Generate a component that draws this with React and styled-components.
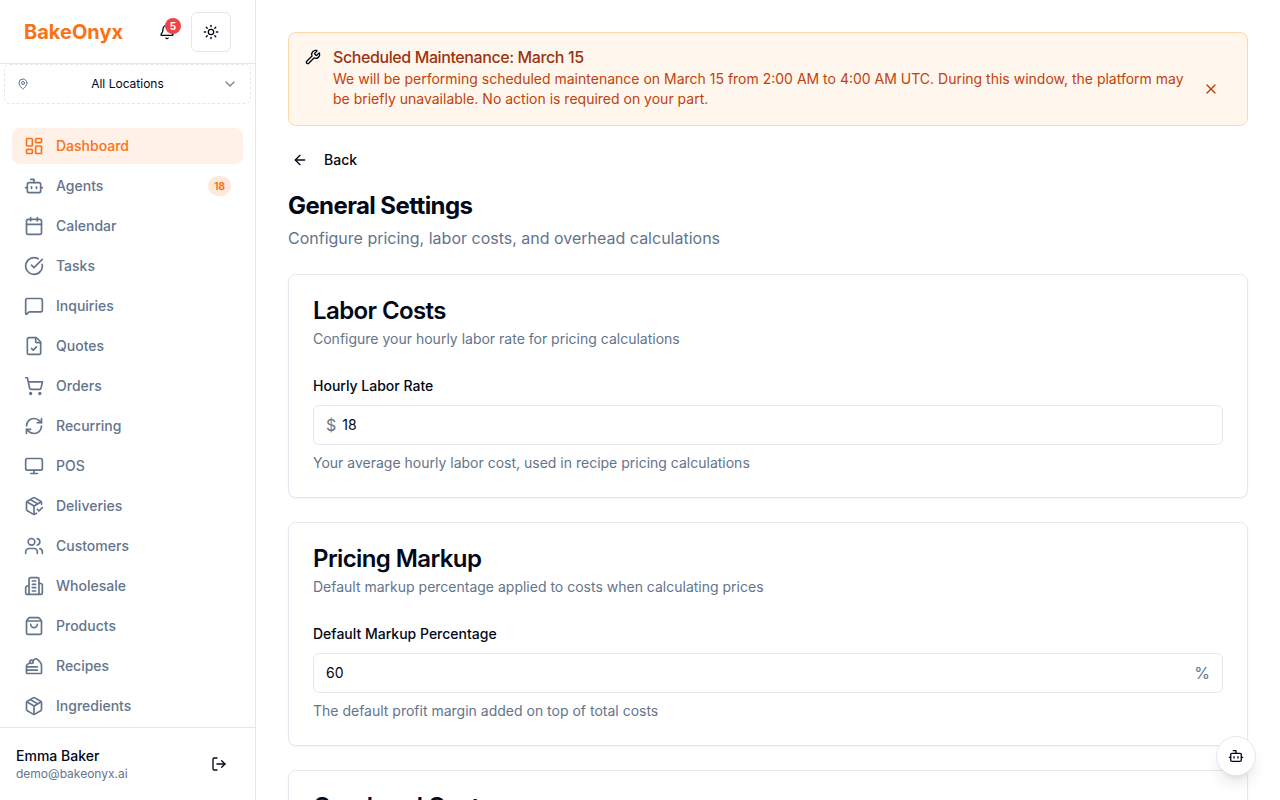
import React from "react";
import styled, { createGlobalStyle, css } from "styled-components";
import {
  ArrowLeft, Bell, Bot, CakeSlice, Calendar, ChevronDown, CircleCheckBig, FileCheck,
  LayoutDashboard, LogOut, MapPin, MessageSquare, Monitor, Package, PackageCheck,
  RefreshCw, ShoppingBag, ShoppingCart, Sun, Users, Wrench, X,
} from "lucide-react";

const color = {
  ink: "#020817",
  muted: "#64748b",
  line: "#e2e8f0",
  brand: "#f97316",
};

const GlobalStyle = createGlobalStyle`
  *, *::before, *::after { box-sizing: border-box; }
  body {
    margin: 0;
    background: #fff;
    color: ${color.ink};
    font: 400 16px/24px Inter, "Liberation Sans", sans-serif;
  }
  h1, h2, p { margin: 0; }
  button, input { font: inherit; color: inherit; }
  svg { flex-shrink: 0; display: block; }
`;

const Shell = styled.div`
  display: flex;
  height: 100vh;
`;

const Sidebar = styled.aside`
  display: flex;
  flex-direction: column;
  flex: 0 0 256px;
  border-right: 1px solid ${color.line};
`;

const SidebarHeader = styled.header`
  display: flex;
  align-items: center;
  justify-content: space-between;
  height: 64px;
  padding: 0 24px;
  border-bottom: 1px solid ${color.line};
`;

const Brand = styled.a`
  color: ${color.brand};
  font-size: 20px;
  line-height: 28px;
  font-weight: 700;
  text-decoration: none;
`;

const Actions = styled.div`
  display: flex;
  gap: 4px;
`;

const IconButton = styled.button`
  position: relative;
  display: flex;
  align-items: center;
  justify-content: center;
  flex-shrink: 0;
  width: 40px;
  height: 40px;
  padding: 0;
  border: 1px solid ${(p) => (p.$outlined ? color.line : "transparent")};
  border-radius: 6px;
  background: transparent;
  color: ${(p) => p.$color || "inherit"};
  cursor: pointer;
`;

const AlertCount = styled.span`
  position: absolute;
  top: 5px;
  right: 5px;
  display: flex;
  align-items: center;
  justify-content: center;
  width: 16px;
  height: 16px;
  border-radius: 50%;
  background: #ef4444;
  color: #fff;
  font-size: 10px;
  line-height: 16px;
  font-weight: 700;
`;

const LocationPicker = styled.button`
  display: flex;
  align-items: center;
  gap: 4px;
  height: 40px;
  flex-shrink: 0;
  margin: 0 4px;
  padding: 0 12px;
  border: 1px dashed ${color.line};
  border-radius: 6px;
  background: transparent;
  font-size: 12px;
  line-height: 16px;
  cursor: pointer;

  span { flex: 1; margin-right: -4px; }
  svg { color: ${color.muted}; }
  svg:last-child { color: ${color.ink}; opacity: 0.5; }
`;

const Nav = styled.nav`
  flex: 1;
  min-height: 0;
  margin-top: 12px;
  padding: 12px;
  display: flex;
  flex-direction: column;
  gap: 4px;
  overflow-y: auto;
  scrollbar-width: none;
`;

const NavLink = styled.a`
  display: flex;
  align-items: center;
  gap: 12px;
  flex-shrink: 0;
  height: 36px;
  padding: 0 12px;
  border-radius: 8px;
  color: ${color.muted};
  font-size: 14px;
  line-height: 20px;
  font-weight: 500;
  text-decoration: none;
  ${(p) => p.$active && css`
    background: #fff0e8;
    color: ${color.brand};
  `}
`;

const NavCount = styled.span`
  margin-left: auto;
  padding: 0 6px;
  border-radius: 10px;
  background: #fee8da;
  color: ${color.brand};
  font-size: 10px;
  line-height: 20px;
  font-weight: 700;
`;

const Account = styled.footer`
  display: flex;
  align-items: center;
  justify-content: space-between;
  flex-shrink: 0;
  padding: 16px;
  border-top: 1px solid ${color.line};
`;

const AccountName = styled.p`
  font-size: 14px;
  line-height: 20px;
  font-weight: 500;
`;

const AccountEmail = styled.p`
  color: ${color.muted};
  font-size: 12px;
  line-height: 16px;
`;

const Main = styled.main`
  flex: 1;
  min-width: 0;
  padding: 32px;
  overflow-y: auto;
  scrollbar-width: none;
`;

const Notice = styled.section`
  display: flex;
  gap: 12px;
  padding: 16px;
  border: 1px solid #fed7aa;
  border-radius: 8px;
  background: #fff7ed;
`;

const NoticeBody = styled.div`
  flex: 1;
  min-width: 0;
`;

const NoticeTitle = styled.h2`
  margin-bottom: 4px;
  color: #9a3412;
  font-size: 16px;
  line-height: 16px;
  font-weight: 500;
  letter-spacing: -0.025em;
`;

const NoticeText = styled.div`
  display: flex;
  align-items: center;
  justify-content: space-between;
  gap: 4px;
  color: #c2410c;
  font-size: 14px;
  line-height: 20px;
`;

const BackLink = styled.a`
  display: inline-flex;
  align-items: center;
  gap: 16px;
  margin: 24px 0 20px;
  padding: 0 4px;
  color: inherit;
  font-size: 14px;
  line-height: 20px;
  font-weight: 500;
  text-decoration: none;
`;

const PageTitle = styled.h1`
  font-size: 24px;
  line-height: 32px;
  font-weight: 700;
  letter-spacing: -0.025em;
`;

const PageIntro = styled.p`
  margin-top: 4px;
  color: ${color.muted};
`;

const Card = styled.section`
  margin-top: 24px;
  padding: 24px;
  border: 1px solid ${color.line};
  border-radius: 8px;
  box-shadow: 0 1px 2px rgba(0, 0, 0, 0.05);
`;

const CardTitle = styled.h2`
  font-size: 24px;
  line-height: 24px;
  font-weight: 600;
  letter-spacing: -0.025em;
`;

const CardText = styled.p`
  margin-top: 6px;
  color: ${color.muted};
  font-size: 14px;
  line-height: 20px;
`;

const Field = styled.div`
  margin-top: 24px;
`;

const Label = styled.label`
  font-size: 14px;
  line-height: 20px;
  font-weight: 500;
`;

const InputBox = styled.div`
  display: flex;
  align-items: center;
  gap: 6px;
  height: 40px;
  margin: 8px 0;
  padding: 0 12px;
  border: 1px solid ${color.line};
  border-radius: 6px;
  color: ${color.muted};
`;

const Input = styled.input`
  flex: 1;
  min-width: 0;
  padding: 0;
  border: 0;
  outline: 0;
  background: transparent;
  color: ${color.ink};
  font-size: 14px;
  line-height: 20px;
`;

const Hint = styled.p`
  color: ${color.muted};
  font-size: 14px;
  line-height: 20px;
`;

const AssistantButton = styled.button`
  position: fixed;
  right: 24px;
  bottom: 24px;
  display: flex;
  align-items: center;
  justify-content: center;
  width: 40px;
  height: 40px;
  padding: 0;
  border: 1px solid ${color.line};
  border-radius: 50%;
  background: #fff;
  box-shadow: 0 10px 15px -3px rgba(0, 0, 0, 0.1), 0 4px 6px -4px rgba(0, 0, 0, 0.1);
  cursor: pointer;
`;

function Tower({ size }) {
  return (
    <svg
      width={size}
      height={size}
      viewBox="0 0 24 24"
      fill="none"
      stroke="currentColor"
      strokeWidth="2"
      strokeLinecap="round"
      strokeLinejoin="round"
      aria-hidden="true"
    >
      <path d="M6 22V4a2 2 0 0 1 2-2h8a2 2 0 0 1 2 2v18Z" />
      <path d="M6 12H4a2 2 0 0 0-2 2v6a2 2 0 0 0 2 2h2" />
      <path d="M18 9h2a2 2 0 0 1 2 2v9a2 2 0 0 1-2 2h-2" />
      <path d="M10 6h4" />
      <path d="M10 10h4" />
      <path d="M10 14h4" />
      <path d="M10 18h4" />
    </svg>
  );
}

const navItems = [
  { label: "Dashboard", icon: LayoutDashboard, active: true },
  { label: "Agents", icon: Bot, count: 18 },
  { label: "Calendar", icon: Calendar },
  { label: "Tasks", icon: CircleCheckBig },
  { label: "Inquiries", icon: MessageSquare },
  { label: "Quotes", icon: FileCheck },
  { label: "Orders", icon: ShoppingCart },
  { label: "Recurring", icon: RefreshCw },
  { label: "POS", icon: Monitor },
  { label: "Deliveries", icon: PackageCheck },
  { label: "Customers", icon: Users },
  { label: "Wholesale", icon: Tower },
  { label: "Products", icon: ShoppingBag },
  { label: "Recipes", icon: CakeSlice },
  { label: "Ingredients", icon: Package },
];

function SettingCard({ id, title, text, label, value, prefix, suffix, hint }) {
  return (
    <Card>
      <CardTitle>{title}</CardTitle>
      <CardText>{text}</CardText>
      <Field>
        <Label htmlFor={id}>{label}</Label>
        <InputBox>
          {prefix && <span>{prefix}</span>}
          <Input id={id} inputMode="decimal" defaultValue={value} />
          {suffix && <span>{suffix}</span>}
        </InputBox>
        <Hint>{hint}</Hint>
      </Field>
    </Card>
  );
}

export default function App() {
  return (
    <>
      <GlobalStyle />
      <Shell>
        <Sidebar>
          <SidebarHeader>
            <Brand href="#home">BakeOnyx</Brand>
            <Actions>
              <IconButton aria-label="Notifications">
                <Bell size={16} />
                <AlertCount>5</AlertCount>
              </IconButton>
              <IconButton $outlined aria-label="Toggle theme">
                <Sun size={16} />
              </IconButton>
            </Actions>
          </SidebarHeader>
          <LocationPicker aria-haspopup="listbox">
            <MapPin size={12} />
            <span>All Locations</span>
            <ChevronDown size={16} />
          </LocationPicker>
          <Nav>
            {navItems.map(({ label, icon: Icon, active, count }) => (
              <NavLink key={label} href={`#${label.toLowerCase()}`} $active={active}>
                <Icon size={20} />
                {label}
                {count && <NavCount>{count}</NavCount>}
              </NavLink>
            ))}
          </Nav>
          <Account>
            <div>
              <AccountName>Emma Baker</AccountName>
              <AccountEmail>demo@bakeonyx.ai</AccountEmail>
            </div>
            <IconButton aria-label="Log out">
              <LogOut size={16} />
            </IconButton>
          </Account>
        </Sidebar>
        <Main>
          <Notice>
            <Wrench size={16} />
            <NoticeBody>
              <NoticeTitle>Scheduled Maintenance: March 15</NoticeTitle>
              <NoticeText>
                <p>
                  We will be performing scheduled maintenance on March 15 from 2:00 AM to 4:00 AM UTC.
                  During this window, the platform may be briefly unavailable. No action is required on
                  your part.
                </p>
                <IconButton aria-label="Dismiss" $color="#c2410c">
                  <X size={16} />
                </IconButton>
              </NoticeText>
            </NoticeBody>
          </Notice>
          <BackLink href="#settings">
            <ArrowLeft size={16} />
            Back
          </BackLink>
          <PageTitle>General Settings</PageTitle>
          <PageIntro>Configure pricing, labor costs, and overhead calculations</PageIntro>
          <SettingCard
            id="labor-rate"
            title="Labor Costs"
            text="Configure your hourly labor rate for pricing calculations"
            label="Hourly Labor Rate"
            value="18"
            prefix="$"
            hint="Your average hourly labor cost, used in recipe pricing calculations"
          />
          <SettingCard
            id="markup"
            title="Pricing Markup"
            text="Default markup percentage applied to costs when calculating prices"
            label="Default Markup Percentage"
            value="60"
            suffix="%"
            hint="The default profit margin added on top of total costs"
          />
          <Card>
            <CardTitle>Overhead Costs</CardTitle>
          </Card>
        </Main>
      </Shell>
      <AssistantButton aria-label="Open assistant">
        <Bot size={16} />
      </AssistantButton>
    </>
  );
}
